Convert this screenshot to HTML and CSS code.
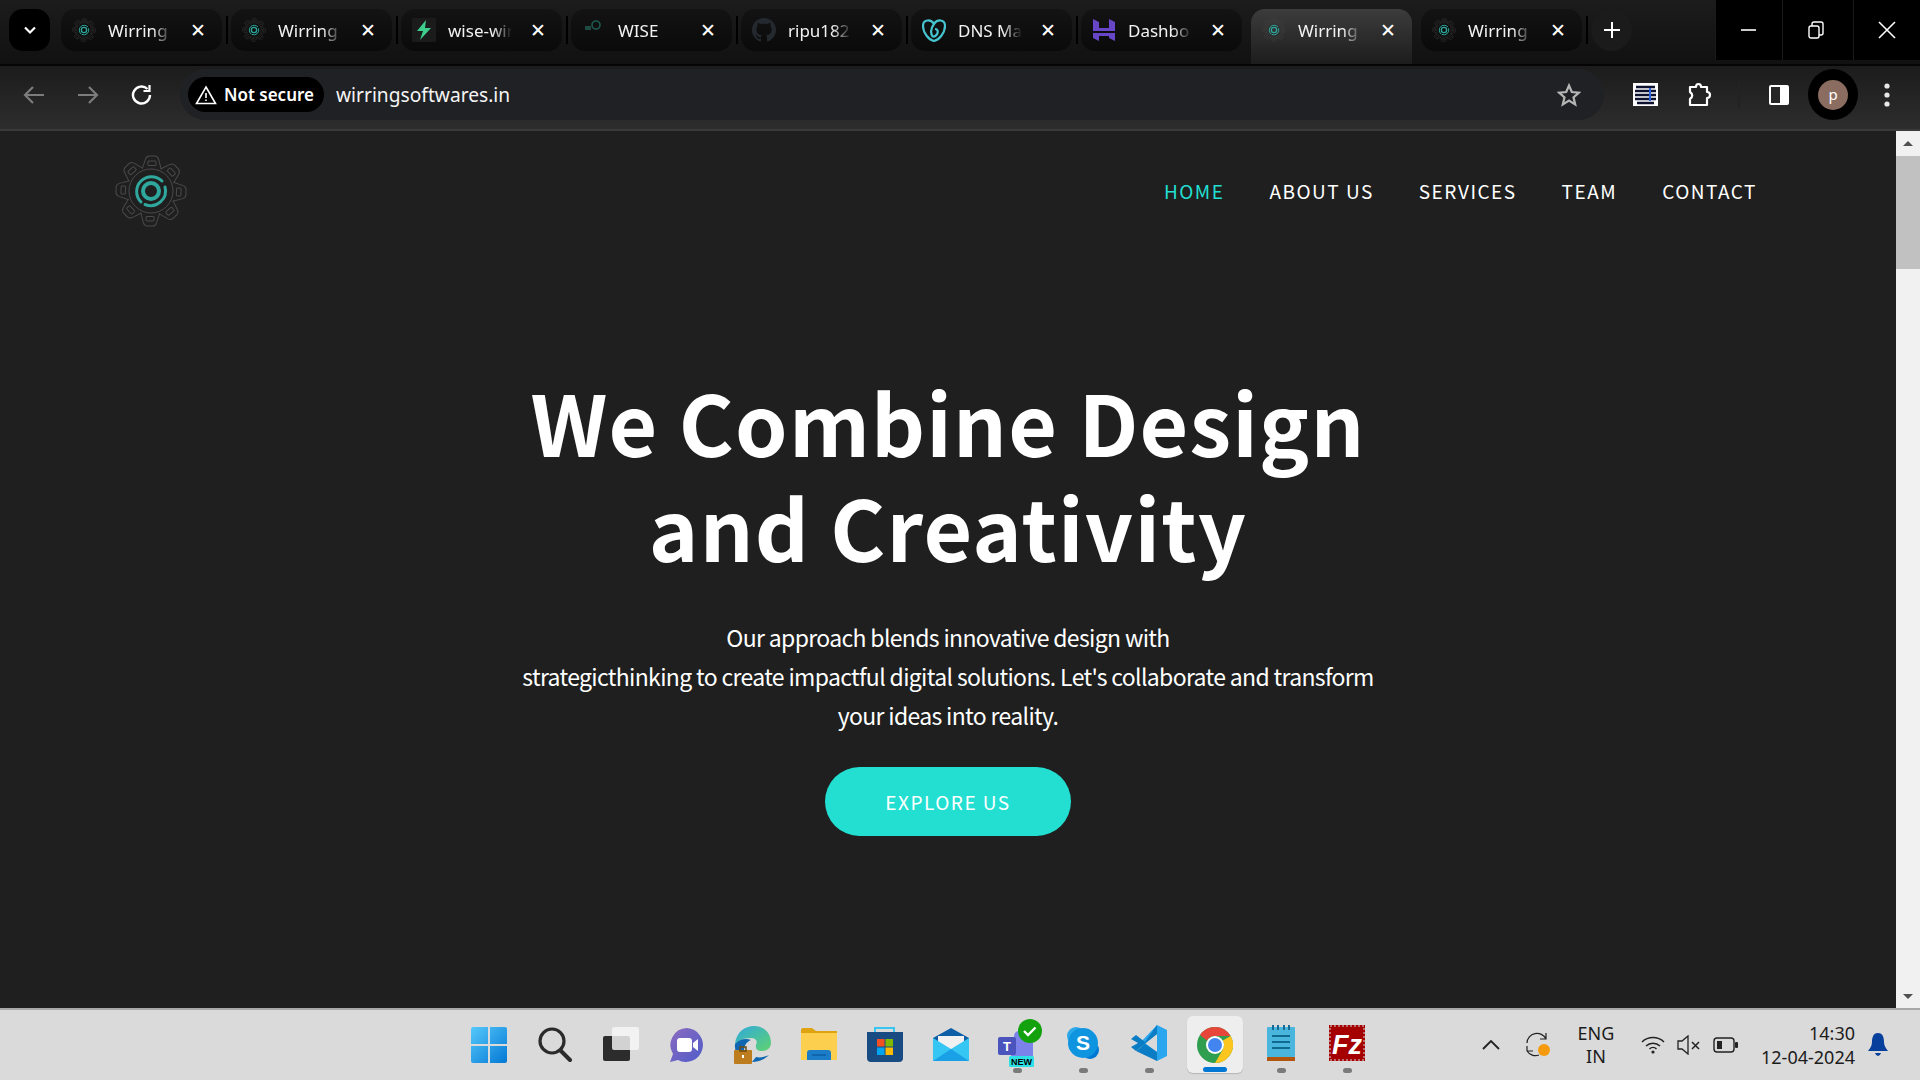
FILE: index.html
```html
<!DOCTYPE html>
<html>
<head>
    <meta charset="utf-8">
    <title>Wirring Softwares</title>
    <link rel="stylesheet" href="styles.css">
</head>
<body>
    <svg class="defs" width="0" height="0">
        <defs>
            <g id="tooth">
                <path d="M-9.5 -22 L-6.5 -32 Q-5.5 -35 -2.5 -35 L2.5 -35 Q5.5 -35 6.5 -32 L9.5 -22" fill="none" stroke="#4a4a4a" stroke-width="1"/>
                <rect x="-4" y="-30" width="8" height="4.5" rx="1" fill="none" stroke="#4a4a4a" stroke-width="1"/>
            </g>
            <symbol id="gear" viewBox="-36 -36 72 72">
                <use href="#tooth" transform="rotate(2)"/>
                <use href="#tooth" transform="rotate(47)"/>
                <use href="#tooth" transform="rotate(92)"/>
                <use href="#tooth" transform="rotate(137)"/>
                <use href="#tooth" transform="rotate(182)"/>
                <use href="#tooth" transform="rotate(227)"/>
                <use href="#tooth" transform="rotate(272)"/>
                <use href="#tooth" transform="rotate(317)"/>
                <circle r="22" fill="none" stroke="#4a4a4a" stroke-width="1"/>
                <circle r="8" fill="none" stroke="#2fa79c" stroke-width="4"/>
                <path d="M-10 11 A14.8 14.8 0 1 1 11 -10" fill="none" stroke="#2fa79c" stroke-width="3" stroke-linecap="round"/>
                <path d="M14 -4 A14.8 14.8 0 0 1 -6 13.5" fill="none" stroke="#2fa79c" stroke-width="3" stroke-linecap="round"/>
            </symbol>
        </defs>
    </svg>

    <div class="tabstrip">
        <button class="tab-search">
            <svg width="16" height="16" viewBox="0 0 16 16"><path d="M3 5.5 L8 10.5 L13 5.5" fill="none" stroke="#fff" stroke-width="2.2"/></svg>
        </button>

        <div class="tab">
            <svg class="favicon" viewBox="0 0 24 24"><use href="#gear"/></svg>
            <span class="tab-title">Wirring</span>
            <span class="tab-close">✕</span>
        </div>
        <i class="tab-sep"></i>
        <div class="tab">
            <svg class="favicon" viewBox="0 0 24 24"><use href="#gear"/></svg>
            <span class="tab-title">Wirring</span>
            <span class="tab-close">✕</span>
        </div>
        <i class="tab-sep"></i>
        <div class="tab">
            <svg class="favicon" viewBox="0 0 24 24"><rect width="24" height="27" rx="3" y="-2" fill="#1b1b1b"/><path d="M14 2 L5 13 L11 13 L8 22 L19 10 L13 10 Z" fill="#3ecf8e"/></svg>
            <span class="tab-title">wise-wir</span>
            <span class="tab-close">✕</span>
        </div>
        <i class="tab-sep"></i>
        <div class="tab">
            <svg class="favicon" viewBox="0 0 24 24"><rect x="3" y="8" width="6" height="4" fill="#1f4a44"/><circle cx="14" cy="7" r="4" fill="none" stroke="#1f5a50" stroke-width="1.6"/></svg>
            <span class="tab-title">WISE</span>
            <span class="tab-close">✕</span>
        </div>
        <i class="tab-sep"></i>
        <div class="tab">
            <svg class="favicon" viewBox="0 0 16 16"><path fill="#24292f" d="M8 0C3.58 0 0 3.58 0 8c0 3.54 2.29 6.53 5.47 7.59.4.07.55-.17.55-.38 0-.19-.01-.82-.01-1.49-2.01.37-2.53-.49-2.69-.94-.09-.23-.48-.94-.82-1.13-.28-.15-.68-.52-.01-.53.63-.01 1.08.58 1.23.82.72 1.21 1.87.87 2.33.66.07-.52.28-.87.51-1.07-1.78-.2-3.64-.89-3.64-3.95 0-.87.31-1.59.82-2.15-.08-.2-.36-1.02.08-2.12 0 0 .67-.21 2.2.82.64-.18 1.32-.27 2-.27s1.36.09 2 .27c1.53-1.04 2.2-.82 2.2-.82.44 1.1.16 1.92.08 2.12.51.56.82 1.27.82 2.15 0 3.07-1.87 3.75-3.65 3.95.29.25.54.73.54 1.48 0 1.07-.01 1.93-.01 2.2 0 .21.15.46.55.38A8.01 8.01 0 0 0 16 8c0-4.42-3.58-8-8-8z"/></svg>
            <span class="tab-title">ripu182</span>
            <span class="tab-close">✕</span>
        </div>
        <i class="tab-sep"></i>
        <div class="tab">
            <svg class="favicon" viewBox="0 0 24 24" fill="none" stroke="#45c4d0" stroke-width="2.2"><path d="M12 6 C9 1 1 1 1 8 C1 15 7 22 12 23 C17 22 23 15 23 8 C23 1 15 1 12 6 C9 10 8 15 11 19"/><path d="M11 19 C17 17 17 11 13 11"/></svg>
            <span class="tab-title">DNS Ma</span>
            <span class="tab-close">✕</span>
        </div>
        <i class="tab-sep"></i>
        <div class="tab">
            <svg class="favicon" viewBox="0 0 24 24" fill="#6747c7"><path d="M1 1 L7 4 L7 10 L17 10 L17 1 L23 4 L23 13 L1 13 Z"/><path d="M1 15 L23 15 L23 23 L17 20 L17 18 L7 18 L7 23 L1 20 Z"/></svg>
            <span class="tab-title">Dashbo</span>
            <span class="tab-close">✕</span>
        </div>
        <i class="tab-gap"></i>
        <div class="tab tab-active">
            <svg class="favicon" viewBox="0 0 24 24"><use href="#gear"/></svg>
            <span class="tab-title">Wirring</span>
            <span class="tab-close">✕</span>
        </div>
        <i class="tab-gap"></i>
        <div class="tab">
            <svg class="favicon" viewBox="0 0 24 24"><use href="#gear"/></svg>
            <span class="tab-title">Wirring</span>
            <span class="tab-close">✕</span>
        </div>
        <i class="tab-sep"></i>
        <button class="tab-new">
            <svg width="18" height="18" viewBox="0 0 18 18"><path d="M9 1 V17 M1 9 H17" stroke="#fff" stroke-width="2"/></svg>
        </button>

        <div class="window-controls">
            <div class="win-btn"><svg width="16" height="16" viewBox="0 0 16 16"><path d="M0 8 H15" stroke="#fff" stroke-width="1.6"/></svg></div>
            <div class="win-btn win-restore"><svg width="16" height="18" viewBox="0 0 16 18" fill="none" stroke="#fff" stroke-width="1.4"><rect x="1" y="5" width="10" height="12" rx="2"/><path d="M4 5 V3 Q4 1 6 1 H13 Q15 1 15 3 V12 Q15 14 13 14 H11"/></svg></div>
            <div class="win-btn"><svg width="18" height="18" viewBox="0 0 18 18"><path d="M1 1 L17 17 M17 1 L1 17" stroke="#fff" stroke-width="1.6"/></svg></div>
        </div>
    </div>

    <div class="toolbar">
        <div class="nav-btn">
            <svg width="22" height="20" viewBox="0 0 22 20" fill="none" stroke="#7c7c7c" stroke-width="2.2"><path d="M21 10 H3 M10 2 L2 10 L10 18"/></svg>
        </div>
        <div class="nav-btn">
            <svg width="22" height="20" viewBox="0 0 22 20" fill="none" stroke="#7c7c7c" stroke-width="2.2"><path d="M1 10 H19 M12 2 L20 10 L12 18"/></svg>
        </div>
        <div class="nav-btn">
            <svg width="22" height="22" viewBox="0 0 22 22" fill="none" stroke="#fff" stroke-width="2.4"><path d="M19 11 A8.5 8.5 0 1 1 16.5 5"/><path d="M18.5 1 V7 H12.5" stroke-width="2.2"/></svg>
        </div>
        <div class="omnibox">
            <div class="security-chip">
                <svg width="22" height="20" viewBox="0 0 22 20" fill="none" stroke="#fff" stroke-width="1.6"><path d="M11 2 L20.5 18.5 H1.5 Z"/><path d="M11 8 V13 M11 14.5 V16"/></svg>
                <span>Not secure</span>
            </div>
            <span class="url">wirringsoftwares.in</span>
            <svg class="star" width="24" height="24" viewBox="0 0 24 24" fill="none" stroke="#b5b5b5" stroke-width="2.2"><path d="M12 2.5 L14.8 9 L22 9.6 L16.5 14.3 L18.2 21.4 L12 17.6 L5.8 21.4 L7.5 14.3 L2 9.6 L9.2 9 Z"/></svg>
        </div>
        <div class="tool-btn">
            <svg width="25" height="23" viewBox="0 0 25 23"><rect width="25" height="23" fill="#fff"/><path d="M3 4 H22 M2 8 H23 M2 12 H23 M2 16 H23 M4 20 H21" stroke="#0d1230" stroke-width="2.6"/><path d="M17 5 V18" stroke="#2b62e0" stroke-width="2"/></svg>
        </div>
        <div class="tool-btn">
            <svg width="26" height="26" viewBox="0 0 26 26" fill="none" stroke="#fff" stroke-width="2.2" stroke-linejoin="round"><path d="M4 5 H10 C10 1 15 1 15 5 H21 V10 C25 10 25 16 21 16 V23 H4 V17 C7 15 7 12 4 10 Z"/></svg>
        </div>
        <i class="tool-sep"></i>
        <div class="tool-btn">
            <svg width="22" height="22" viewBox="0 0 22 22"><rect x="1" y="1" width="20" height="20" rx="2" fill="#fff"/><rect x="3" y="3" width="9" height="16" fill="#262626"/></svg>
        </div>
        <div class="profile"><span class="avatar">p</span></div>
        <div class="tool-btn">
            <svg width="6" height="24" viewBox="0 0 6 24" fill="#e8e8e8"><circle cx="3" cy="3" r="2.6"/><circle cx="3" cy="12" r="2.6"/><circle cx="3" cy="21" r="2.6"/></svg>
        </div>
    </div>

    <div class="viewport">
        <div class="site">
            <header class="site-header">
                <svg class="site-logo" viewBox="0 0 72 72"><use href="#gear"/></svg>
                <nav class="site-nav">
                    <a class="active">HOME</a>
                    <a>ABOUT US</a>
                    <a>SERVICES</a>
                    <a>TEAM</a>
                    <a>CONTACT</a>
                </nav>
            </header>
            <section class="hero">
                <h1>We Combine Design<br>and Creativity</h1>
                <p>Our approach blends innovative design with<br>strategicthinking to create impactful digital solutions. Let's collaborate and transform<br>your ideas into reality.</p>
                <a class="hero-btn">EXPLORE US</a>
            </section>
        </div>
        <div class="scrollbar">
            <svg width="24" height="24" viewBox="0 0 24 24"><path d="M7 15 L12 10 L17 15 Z" fill="#505050"/></svg>
            <div class="scroll-track"><div class="scroll-thumb"></div></div>
            <svg width="24" height="24" viewBox="0 0 24 24"><path d="M7 10 L12 15 L17 10 Z" fill="#505050"/></svg>
        </div>
    </div>

    <div class="taskbar">
        <div class="task-icons">
            <div class="task-item">
                <svg width="36" height="36" viewBox="0 0 36 36"><defs><linearGradient id="win" x1="0" y1="0" x2="1" y2="1"><stop offset="0" stop-color="#55c8fb"/><stop offset="1" stop-color="#0478d4"/></linearGradient></defs><path d="M0 2 Q0 0 2 0 H17 V17 H0 Z M19 0 H34 Q36 0 36 2 V17 H19 Z M0 19 H17 V36 H2 Q0 36 0 34 Z M19 19 H36 V34 Q36 36 34 36 H19 Z" fill="url(#win)"/></svg>
            </div>
            <div class="task-item">
                <svg width="34" height="36" viewBox="0 0 34 36" fill="none" stroke="#2b2b2b"><circle cx="14" cy="14" r="12" stroke-width="3.2"/><path d="M23 24 L32 33" stroke-width="4" stroke-linecap="round"/></svg>
            </div>
            <div class="task-item">
                <svg width="36" height="36" viewBox="0 0 36 36"><rect y="9" width="27" height="25" rx="2" fill="#2c2c2c"/><rect x="9" y="0" width="27" height="23" rx="2" fill="#f6f6f6" fill-opacity=".82"/></svg>
            </div>
            <div class="task-item">
                <svg width="36" height="36" viewBox="0 0 36 36"><defs><linearGradient id="chat" x1="0" y1="0" x2="1" y2="1"><stop offset="0" stop-color="#8c6bc0"/><stop offset="1" stop-color="#4f5cc9"/></linearGradient></defs><path d="M18 1 A17 17 0 1 1 9 33 L1 35 L4 27 A17 17 0 0 1 18 1 Z" fill="url(#chat)"/><rect x="8" y="11" width="15" height="14" rx="3" fill="#fff"/><path d="M24 16 L29 12 V24 L24 20 Z" fill="#fff"/></svg>
            </div>
            <div class="task-item">
                <svg width="38" height="38" viewBox="0 0 38 38"><defs><linearGradient id="edge" x1="0" y1="0" x2="1" y2="1"><stop offset="0" stop-color="#2fa9dd"/><stop offset="1" stop-color="#5fd36f"/></linearGradient></defs><path d="M1 18 C2 6 11 0 20 0 C31 0 37 8 37 17 C37 22 33 25 28 25 C24 25 21 23 22 19 C24 15 22 12 17 12 C9 12 4 15 1 18 Z" fill="url(#edge)"/><path d="M1 18 C5 13 12 12 17 14 C12 16 10 20 10 26 V35 C5 31 0 26 1 18 Z" fill="#0f67b2"/><path d="M18 36 C24 36 30 34 35 29 C31 31 26 32 22 31 Z" fill="#0f67b2"/><rect x="0" y="24" width="18" height="14" rx="1" fill="#bd7c1d"/><rect x="6" y="21" width="6" height="4" fill="none" stroke="#6e4a12" stroke-width="1.5"/><rect x="8" y="29" width="2" height="3" fill="#fff"/></svg>
            </div>
            <div class="task-item">
                <svg width="36" height="34" viewBox="0 0 36 34"><path d="M0 2 Q0 0 2 0 H11 L15 3 H36 V8 H0 Z" fill="#dea30f"/><path d="M0 5 H36 V32 H0 Z" fill="#fdcf4f"/><path d="M6 32 V25 Q6 22 9 22 H27 Q30 22 30 25 V32 Z" fill="#1b7cc8"/><path d="M11 27 H25" stroke="#0c5ea3" stroke-width="1.4"/></svg>
            </div>
            <div class="task-item">
                <svg width="36" height="36" viewBox="0 0 36 36"><path d="M8 5 V1 H27 V5" fill="none" stroke="#37c6f0" stroke-width="2"/><path d="M0 5 H36 V31 Q36 35 32 35 H4 Q0 35 0 31 Z" fill="#174b82"/><rect x="10" y="12" width="7.5" height="7.5" fill="#f25022"/><rect x="18.5" y="12" width="7.5" height="7.5" fill="#7fba00"/><rect x="10" y="20.5" width="7.5" height="7.5" fill="#00a4ef"/><rect x="18.5" y="20.5" width="7.5" height="7.5" fill="#ffb900"/></svg>
            </div>
            <div class="task-item">
                <svg width="36" height="34" viewBox="0 0 36 34"><path d="M0 10 L18 0 L36 10 V20 H0 Z" fill="#0f5fa8"/><path d="M5 8 H31 V18 L18 24 L5 18 Z" fill="#f1f1f1"/><path d="M0 10 L18 21 L36 10 V33 H0 Z" fill="#35c6f3"/><path d="M0 33 L18 21 L36 33 Z" fill="#1aa0e6"/></svg>
            </div>
            <div class="task-item has-dot">
                <svg class="teams-icon" width="46" height="48" viewBox="0 0 46 48"><circle cx="22" cy="17" r="5" fill="#7b83eb"/><rect x="14" y="20" width="22" height="19" rx="2" fill="#7b83eb"/><rect x="1" y="18" width="18" height="18" rx="2" fill="#4b53bc"/><text x="10" y="32" class="teams-t">T</text><circle cx="33" cy="12" r="12" fill="#13a10e"/><path d="M27 12 L31 16 L38.5 8.5" fill="none" stroke="#fff" stroke-width="2.4"/><rect x="12" y="37" width="25" height="11" rx="1.5" fill="#2ce0e6"/><text x="24.5" y="46" class="teams-new">NEW</text></svg>
            </div>
            <div class="task-item has-dot">
                <svg width="34" height="34" viewBox="0 0 34 34"><circle cx="10" cy="10" r="9" fill="#2ba8e8"/><circle cx="24" cy="24" r="9" fill="#0078d4"/><circle cx="17" cy="17" r="15" fill="#0f95e0"/><text x="17" y="24" class="skype-s">S</text></svg>
            </div>
            <div class="task-item has-dot">
                <svg width="36" height="36" viewBox="0 0 36 36"><path d="M26 0 L36 5 V31 L26 36 L8 19 L26 0 Z M26 9 L14 18 L26 27 Z" fill="#2aa6ee" fill-rule="evenodd"/><path d="M26 0 V9 L5 26 L0 22 L7 18 L0 14 L5 10 L14 17 Z" fill="#0b7dc4"/><path d="M5 26 L14 19 L26 27 V36 Z" fill="#0b7dc4"/></svg>
            </div>
            <div class="task-item task-active has-bar">
                <svg width="36" height="36" viewBox="0 0 36 36"><circle cx="18" cy="18" r="18" fill="#2f9e4f"/><path d="M18 0 A18 18 0 0 1 33.6 9 H18 A9 9 0 0 0 10 13.5 L3 8 A18 18 0 0 1 18 0 Z" fill="#e8453a"/><path d="M33.6 9 A18 18 0 0 1 18 36 L25.8 22.5 A9 9 0 0 0 25.8 13.5 Z" fill="#fcc61e"/><circle cx="18" cy="18" r="9" fill="#fff"/><circle cx="18" cy="18" r="7" fill="#4285f0"/></svg>
            </div>
            <div class="task-item has-dot">
                <svg width="28" height="36" viewBox="0 0 28 36"><rect y="2" width="28" height="30" rx="1" fill="#4ab6de"/><rect y="32" width="28" height="4" fill="#b2560f"/><path d="M6 0 V5 M11 0 V5 M17 0 V5 M22 0 V5" stroke="#176a93" stroke-width="2"/><path d="M5 11 H23 M5 17 H23 M5 23 H23" stroke="#10698f" stroke-width="2"/></svg>
            </div>
            <div class="task-item has-dot">
                <svg width="36" height="36" viewBox="0 0 36 36"><rect width="36" height="36" fill="#a50000"/><rect x="1" y="1" width="34" height="34" fill="none" stroke="#d8d8d8" stroke-width="1" stroke-dasharray="2 2"/><text x="18" y="29" class="fz-text">Fz</text></svg>
            </div>
        </div>

        <div class="tray">
            <svg class="tray-chevron" width="18" height="10" viewBox="0 0 18 10"><path d="M1 9 L9 1 L17 9" fill="none" stroke="#222" stroke-width="1.8"/></svg>
            <svg class="tray-sync" width="26" height="26" viewBox="0 0 26 26" fill="none" stroke="#222" stroke-width="1.2"><path d="M2 11 A10 10 0 0 1 21 7 M21 1 V7 H15"/><path d="M2 19 H8 M2 19 V14 M2 19 A10 10 0 0 0 14 23"/><circle cx="19" cy="18" r="6" fill="#f59a0c" stroke="none"/></svg>
            <div class="tray-lang"><span>ENG</span><span>IN</span></div>
            <svg class="tray-wifi" width="24" height="18" viewBox="0 0 24 18" fill="none" stroke="#222" stroke-width="1.5"><path d="M1 6 A16 16 0 0 1 23 6 M5 10 A10 10 0 0 1 19 10 M8.5 13 A5 5 0 0 1 15.5 13"/><circle cx="12" cy="16" r="1.6" fill="#222" stroke="none"/></svg>
            <svg class="tray-sound" width="24" height="20" viewBox="0 0 24 20" fill="none" stroke="#222" stroke-width="1.3"><path d="M1 6 H5 L11 1 V19 L5 14 H1 Z"/><path d="M15 7 L22 14 M22 7 L15 14" stroke-width="1.5"/></svg>
            <svg class="tray-battery" width="25" height="16" viewBox="0 0 25 16" fill="none" stroke="#222" stroke-width="1.4"><rect x="1" y="1" width="20" height="14" rx="3"/><rect x="4" y="4" width="5" height="8" fill="#222" stroke="none"/><rect x="22" y="5" width="3" height="6" rx="1" fill="#222" stroke="none"/></svg>
            <div class="tray-clock"><span>14:30</span><span>12-04-2024</span></div>
            <svg class="tray-bell" width="20" height="24" viewBox="0 0 20 24"><path d="M10 0 C15 0 16 5 16 9 C16 13 18 15 20 18 H0 C2 15 4 13 4 9 C4 5 5 0 10 0 Z" fill="#063f9c"/><path d="M7 20 H13 Q12 23 10 23 Q8 23 7 20 Z" fill="#063f9c"/></svg>
        </div>
    </div>
</body>
</html>
```

FILE: styles.css
```css
* {
    box-sizing: border-box;
}

html, body {
    margin: 0;
    height: 100%;
}

body {
    width: 1920px;
    height: 1080px;
    overflow: hidden;
    display: flex;
    flex-direction: column;
    font-family: "Noto Sans", "Open Sans", sans-serif;
    background-color: #1f1f1f;
}

.defs {
    position: absolute;
}

button {
    border: 0;
    padding: 0;
}

/* tab strip */
.tabstrip {
    height: 66px;
    flex: none;
    display: flex;
    align-items: flex-start;
    padding: 9px 0 0 9px;
    background: linear-gradient(#1c1c1c, #111111);
    border-bottom: 2px solid #050505;
}

.tab-search {
    width: 41px;
    height: 42px;
    margin-right: 11px;
    border-radius: 14px;
    background-color: #000;
    display: flex;
    align-items: center;
    justify-content: center;
}

.tab {
    width: 161px;
    height: 42px;
    flex: none;
    display: flex;
    align-items: center;
    padding-left: 11px;
    border-radius: 14px;
    background: linear-gradient(#131313, #0a0a0a);
    color: #fff;
}

.tab-active {
    height: 55px;
    padding: 0 0 13px 11px;
    border-radius: 14px 14px 0 0;
    background: linear-gradient(#3c3c3c, #1d1d1d);
}

.favicon {
    width: 24px;
    height: 24px;
    flex: none;
}

.tab-title {
    width: 64px;
    margin-left: 12px;
    padding-top: 2px;
    font-size: 17px;
    line-height: 26px;
    white-space: nowrap;
    color: #f2f2f2;
    -webkit-mask-image: linear-gradient(to right, #000 70%, transparent 100%);
    mask-image: linear-gradient(to right, #000 70%, transparent 100%);
}

.tab-close {
    width: 20px;
    margin-left: 16px;
    text-align: center;
    font-family: "DejaVu Sans", sans-serif;
    font-size: 19px;
    line-height: 22px;
    font-weight: 700;
    color: #fff;
}

.tab-sep {
    width: 9px;
    height: 28px;
    margin-top: 7px;
    flex: none;
    background: linear-gradient(#000, #000) center / 2px 100% no-repeat;
}

.tab-gap {
    width: 9px;
    flex: none;
}

.tab-new {
    width: 41px;
    height: 42px;
    border-radius: 50%;
    background-color: #1b1b1b;
    display: flex;
    align-items: center;
    justify-content: center;
}

.window-controls {
    margin: -9px 0 0 auto;
    height: 60px;
    width: 205px;
    display: flex;
    background-color: #000;
}

.win-btn {
    flex: 1;
    display: flex;
    align-items: center;
    justify-content: center;
    border-left: 1px solid #1a1a1a;
}

.win-restore {
    padding-right: 4px;
}

/* address bar */
.toolbar {
    height: 65px;
    flex: none;
    display: flex;
    align-items: center;
    padding: 0 0 6px 7px;
    background: linear-gradient(#1c1c1c, #2d2d2d);
    border-bottom: 2px solid #3a3a3a;
}

.nav-btn {
    width: 54px;
    display: flex;
    justify-content: center;
}

.omnibox {
    width: 1424px;
    height: 51px;
    margin-left: 11px;
    display: flex;
    align-items: center;
    padding: 0 23px 0 8px;
    border-radius: 26px;
    background-color: #202124;
}

.security-chip {
    height: 35px;
    width: 136px;
    display: flex;
    align-items: center;
    gap: 7px;
    padding-left: 7px;
    border-radius: 18px;
    background-color: #000;
    color: #fff;
    font-size: 17px;
    font-weight: 600;
    white-space: nowrap;
}

.url {
    margin-left: 12px;
    font-size: 19.2px;
    color: #f4f4f4;
}

.star {
    margin-left: auto;
}

.tool-btn {
    width: 54px;
    display: flex;
    justify-content: center;
}

.toolbar .omnibox + .tool-btn {
    margin-left: 14px;
}

.tool-sep {
    width: 2px;
    height: 28px;
    margin: 0 12px;
    background-color: #222;
}

.profile {
    width: 50px;
    height: 51px;
    margin-left: 2px;
    display: flex;
    align-items: center;
    justify-content: center;
    border-radius: 50%;
    background-color: #000;
}

.profile + .tool-btn {
    margin-left: 2px;
}

.avatar {
    width: 30px;
    height: 30px;
    border-radius: 50%;
    background-color: #8a6c60;
    color: #fff;
    font-size: 15px;
    line-height: 28px;
    text-align: center;
}

/* page */
.viewport {
    height: 877px;
    flex: none;
    display: flex;
}

.site {
    flex: 1;
    color: #fff;
    font-family: "Noto Sans CJK JP", "Noto Sans", sans-serif;
    background-color: #1f1f1f;
}

.site-header {
    display: flex;
    align-items: center;
    justify-content: space-between;
    padding: 24px 139px 0 115px;
}

.site-logo {
    width: 72px;
    height: 72px;
}

.site-nav {
    display: flex;
    gap: 45px;
    margin-top: -2px;
}

.site-nav a {
    font-size: 19px;
    letter-spacing: 1.5px;
    color: #fff;
}

.site-nav a.active {
    color: #22dfd2;
}

.hero {
    display: flex;
    flex-direction: column;
    align-items: center;
    text-align: center;
    padding-top: 141px;
}

.hero h1 {
    margin: 0;
    font-size: 84px;
    font-weight: 700;
    line-height: 105px;
    letter-spacing: 1.2px;
}

.hero p {
    margin: 40px 0 0;
    font-size: 23px;
    line-height: 39px;
    letter-spacing: -0.66px;
}

.hero-btn {
    width: 246px;
    height: 69px;
    margin-top: 32px;
    border-radius: 35px;
    background-color: #22dfd2;
    font-size: 19px;
    line-height: 69px;
    letter-spacing: 1.5px;
}

.scrollbar {
    width: 24px;
    display: flex;
    flex-direction: column;
    background-color: #f1f1f1;
}

.scroll-track {
    flex: 1;
    padding-top: 1px;
}

.scroll-thumb {
    height: 113px;
    background-color: #c1c1c1;
}

/* windows taskbar */
.taskbar {
    flex: 1;
    display: flex;
    align-items: flex-start;
    padding-left: 456px;
    background-color: #dadada;
    border-top: 2px solid #a8a8a8;
}

.task-icons {
    display: flex;
}

.task-item {
    width: 66px;
    height: 70px;
    display: flex;
    align-items: center;
    justify-content: center;
    position: relative;
}

.task-item.has-dot::after,
.task-item.has-bar::after {
    content: "";
    position: absolute;
    left: 50%;
    bottom: 7px;
    width: 9px;
    height: 5px;
    margin-left: -4px;
    border-radius: 3px;
    background-color: #7a7a7a;
}

.task-item.has-dot svg {
    margin-top: -4px;
}

.task-item.has-bar::after {
    bottom: 1px;
    width: 24px;
    margin-left: -12px;
    background-color: #0078d4;
}

.task-active {
    width: 56px;
    height: 57px;
    margin: 6px 5px 0;
    border-radius: 6px;
    background-color: #eeeeee;
    box-shadow: 0 1px 1px #b5b5b5;
}

.task-item .teams-icon {
    overflow: visible;
    margin-left: 5px;
}

.teams-t {
    font: 700 13px "Liberation Sans", sans-serif;
    fill: #fff;
    text-anchor: middle;
}

.teams-new {
    font: 700 9px "Liberation Sans", sans-serif;
    fill: #000;
    text-anchor: middle;
}

.skype-s {
    font: 700 21px "Liberation Sans", sans-serif;
    fill: #fff;
    text-anchor: middle;
}

.fz-text {
    font: italic 700 27px "Liberation Sans", sans-serif;
    fill: #fff;
    text-anchor: middle;
}

.tray {
    margin-left: auto;
    display: flex;
    align-items: center;
    height: 70px;
    padding-right: 32px;
    color: #1c1c1c;
    font-size: 18px;
}

.tray-chevron {
    margin-right: 25px;
}

.tray-lang {
    width: 50px;
    margin: 0 20px;
    display: flex;
    flex-direction: column;
    align-items: center;
    line-height: 23px;
}

.tray-sound {
    margin: 0 12px;
}

.tray-clock {
    width: 117px;
    display: flex;
    flex-direction: column;
    align-items: flex-end;
    line-height: 24px;
    margin-right: 13px;
}
```
